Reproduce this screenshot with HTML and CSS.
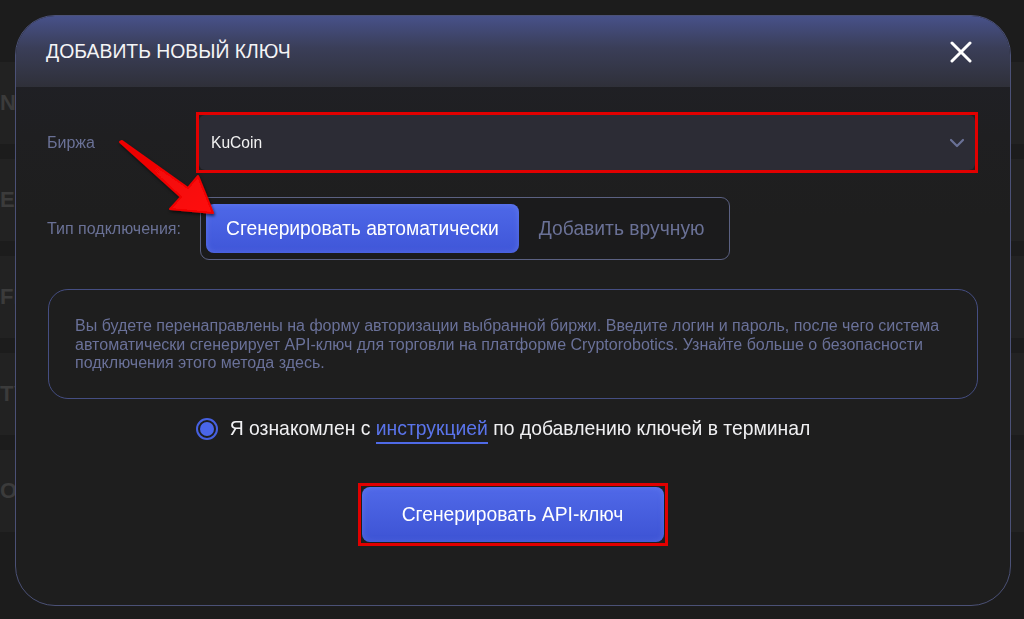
FILE: index.html
```html
<!DOCTYPE html>
<html lang="ru">
<head>
<meta charset="utf-8">
<title>Добавить новый ключ</title>
<link rel="stylesheet" href="styles.css">
</head>
<body>
<div class="page">
  <div class="page-row"><span>NAME</span></div>
  <div class="page-row"><span>EXCHANGE</span></div>
  <div class="page-row"><span>FILTER</span></div>
  <div class="page-row"><span>TYPE</span></div>
  <div class="page-row"><span>OPTIONS</span></div>
</div>

<div class="overlay">
  <div class="modal">
    <div class="modal-head">
      <h2 class="modal-title">ДОБАВИТЬ НОВЫЙ КЛЮЧ</h2>
      <button class="close" aria-label="Закрыть">
        <svg width="22" height="22" viewBox="0 0 22 22"><path d="M2 2 L20 20 M20 2 L2 20" stroke="#fff" stroke-width="3" stroke-linecap="round" fill="none"/></svg>
      </button>
    </div>
    <div class="modal-body">
      <div class="field">
        <div class="field-label">Биржа</div>
        <div class="mark mark-select">
          <div class="select">
            <span class="select-value">KuCoin</span>
            <svg class="chevron" width="16" height="10" viewBox="0 0 16 10"><path d="M2 2 L8 8 L14 2" stroke="#6a7196" stroke-width="2.2" fill="none" stroke-linecap="round" stroke-linejoin="round"/></svg>
          </div>
        </div>
      </div>
      <div class="field field-type">
        <div class="field-label">Тип подключения:</div>
        <div class="toggle">
          <button class="tab tab-active">Сгенерировать автоматически</button>
          <button class="tab">Добавить вручную</button>
        </div>
      </div>
      <div class="info">
        Вы будете перенаправлены на форму авторизации выбранной биржи. Введите логин и пароль, после чего система<br>
        автоматически сгенерирует API-ключ для торговли на платформе Cryptorobotics. Узнайте больше о безопасности<br>
        подключения этого метода здесь.
      </div>
      <div class="agree">
        <span class="radio"><span class="radio-dot"></span></span>
        <span class="agree-text">Я ознакомлен с <a class="link" href="#">инструкцией</a> по добавлению ключей в терминал</span>
      </div>
      <div class="actions">
        <div class="mark mark-btn">
          <button class="primary">Сгенерировать API-ключ</button>
        </div>
      </div>
    </div>
  </div>
  <svg class="arrow" width="1024" height="619" viewBox="0 0 1024 619">
    <defs>
      <linearGradient id="ag" x1="0" y1="0" x2="1" y2="1">
        <stop offset="0" stop-color="#e80000"/>
        <stop offset="1" stop-color="#ff1010"/>
      </linearGradient>
      <filter id="sh" x="-20%" y="-20%" width="140%" height="140%">
        <feDropShadow dx="1" dy="2" stdDeviation="1.5" flood-color="#000" flood-opacity="0.6"/>
      </filter>
    </defs>
    <polygon points="120,142 122,141 188,188 198,176 213,213 170,209 181,197" fill="url(#ag)" stroke="#f00000" stroke-width="2" stroke-linejoin="round" filter="url(#sh)"/>
  </svg>
</div>
</body>
</html>
```

FILE: styles.css
```css
* { box-sizing: border-box; }

html, body {
  margin: 0;
  padding: 0;
  height: 100%;
}

body {
  background: #1c1c1c;
  font-family: "Liberation Sans", Arial, sans-serif;
  overflow: hidden;
}

.page {
  padding-top: 62px;
  display: flex;
  flex-direction: column;
  gap: 15px;
}

.page-row {
  height: 82px;
  background: #222222;
  display: flex;
  align-items: center;
}

.page-row span {
  font-size: 22px;
  font-weight: 700;
  color: #3b3b3b;
}

.overlay {
  position: fixed;
  inset: 0;
  padding: 15px 13px 13px 15px;
}

.modal {
  height: 591px;
  border: 1px solid #4b5176;
  border-radius: 40px;
  background: linear-gradient(180deg, #202129 0px, #1f1f21 120px, #1e1e1e 200px);
  display: flex;
  flex-direction: column;
  overflow: hidden;
}

.modal-head {
  height: 71px;
  flex: none;
  background: linear-gradient(180deg, #47518a 0%, #3a3e58 45%, #2f3039 100%);
  display: flex;
  align-items: center;
  justify-content: space-between;
  padding: 0 38px 0 30px;
}

.modal-title {
  margin: 0;
  font-size: 19.4px;
  font-weight: 400;
  color: #f4f4f6;
}

.close {
  border: 0;
  background: none;
  padding: 0;
  width: 22px;
  height: 22px;
  display: block;
  cursor: pointer;
}

.close svg { display: block; }

.modal-body {
  padding: 25px 32px 0 31px;
  display: flex;
  flex-direction: column;
}

.field {
  display: flex;
  align-items: center;
}

.field-label {
  width: 149px;
  flex: none;
  font-size: 16px;
  color: #6a7196;
}

.mark {
  border: 3px solid #e10000;
}

.mark-select {
  flex: 1;
}

.select {
  height: 55px;
  background: #2c2c35;
  border-radius: 6px;
  display: flex;
  align-items: center;
  justify-content: space-between;
  padding: 0 10px 0 12px;
}

.select-value {
  font-size: 15.6px;
  color: #f2f2f2;
}

.chevron { display: block; }

.field-type {
  margin-top: 24px;
}

.toggle {
  margin-left: 4px;
  border: 1px solid #5b6182;
  border-radius: 9px;
  padding: 6px 4px 6px 5px;
  display: flex;
  align-items: center;
  background: #1b1b1c;
}

.tab {
  border: 0;
  background: none;
  font-family: "Liberation Sans", Arial, sans-serif;
  font-size: 19.3px;
  color: #6a7196;
  height: 49px;
  padding: 0 20px;
  border-radius: 8px;
  cursor: pointer;
}

.tab-active {
  color: #ffffff;
  background: linear-gradient(180deg, #4e68e8 0%, #3f56d8 100%);
  box-shadow: inset 0 0 6px rgba(140, 160, 255, 0.35);
}

.info {
  margin-top: 29px;
  margin-left: 1px;
  border: 1px solid #454e82;
  border-radius: 20px;
  padding: 26px 10px 26px 26px;
  font-size: 16.05px;
  line-height: 18.7px;
  color: #6a7199;
}

.agree {
  margin-top: 18px;
  display: flex;
  align-items: center;
  justify-content: center;
  gap: 12px;
  padding-right: 19px;
}

.radio {
  width: 22px;
  height: 22px;
  border-radius: 50%;
  border: 2px solid #4660e0;
  display: flex;
  align-items: center;
  justify-content: center;
  flex: none;
}

.radio-dot {
  width: 14px;
  height: 14px;
  border-radius: 50%;
  background: #4a66ea;
}

.agree-text {
  font-size: 19.35px;
  color: #f0f0f2;
}

.link {
  color: #5a74ea;
  text-decoration: none;
  border-bottom: 2px solid #4f6ae6;
  padding-bottom: 3px;
}

.actions {
  margin-top: 43px;
  display: flex;
  justify-content: center;
}

.mark-btn {
  padding: 1px;
}

.primary {
  display: block;
  width: 302px;
  height: 55px;
  border: 0;
  border-radius: 8px;
  background: linear-gradient(180deg, #5069e8 0%, #3d53d4 100%);
  box-shadow: inset 0 0 6px rgba(140, 160, 255, 0.3);
  color: #ffffff;
  font-family: "Liberation Sans", Arial, sans-serif;
  font-size: 19.3px;
  cursor: pointer;
}

.arrow {
  position: absolute;
  left: 0;
  top: 0;
  pointer-events: none;
}
```
